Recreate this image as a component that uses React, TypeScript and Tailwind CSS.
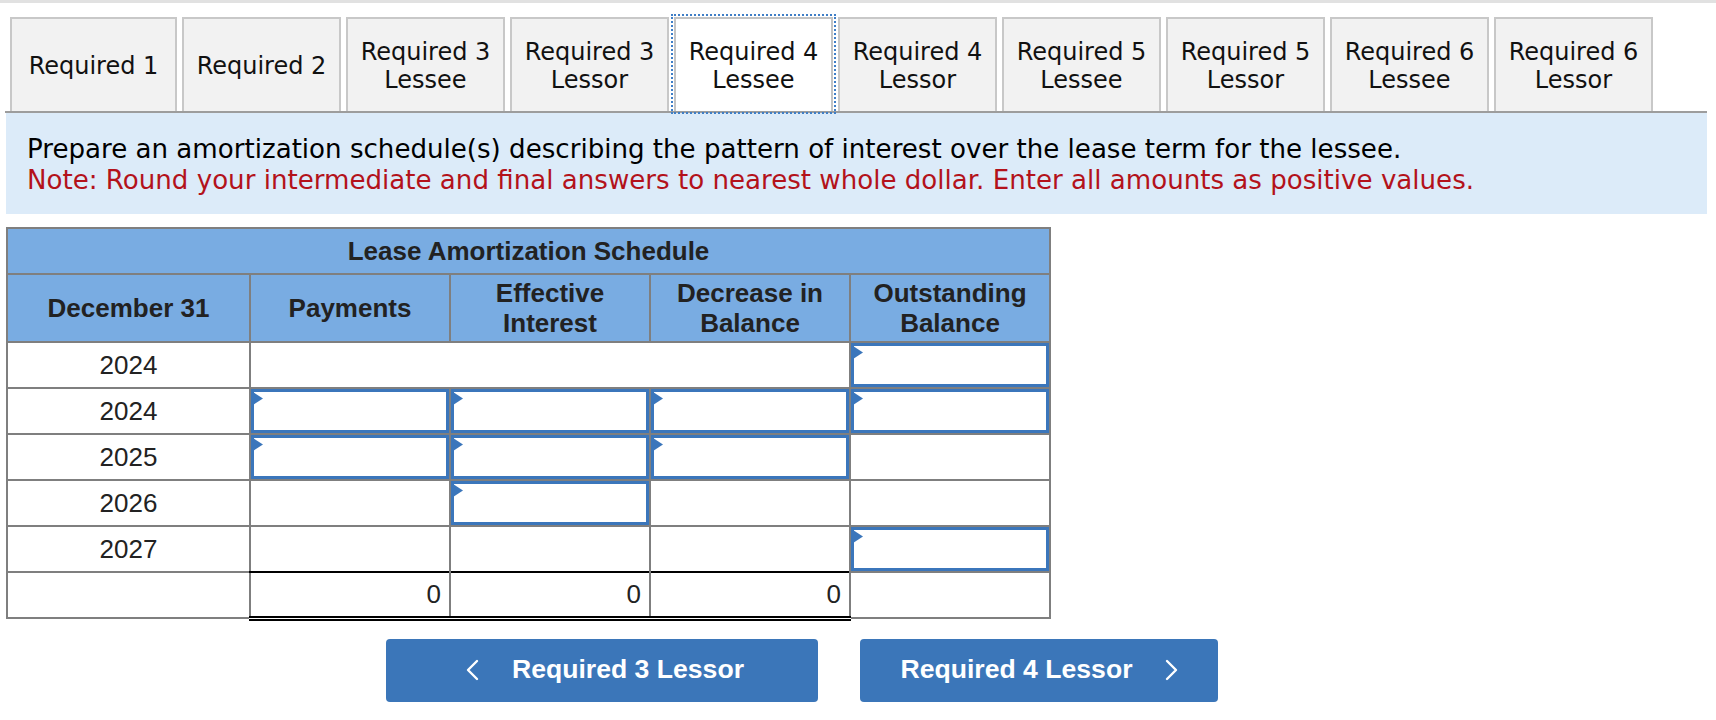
import React from "react";

const tabs: { l1: string; l2?: string; w: string; active?: boolean }[] = [
  { l1: "Required 1", w: "w-[167px]" },
  { l1: "Required 2", w: "w-[159px]" },
  { l1: "Required 3", l2: "Lessee", w: "w-[159px]" },
  { l1: "Required 3", l2: "Lessor", w: "w-[159px]" },
  { l1: "Required 4", l2: "Lessee", w: "w-[159px]", active: true },
  { l1: "Required 4", l2: "Lessor", w: "w-[159px]" },
  { l1: "Required 5", l2: "Lessee", w: "w-[159px]" },
  { l1: "Required 5", l2: "Lessor", w: "w-[159px]" },
  { l1: "Required 6", l2: "Lessee", w: "w-[159px]" },
  { l1: "Required 6", l2: "Lessor", w: "w-[159px]" },
];

const B = "border-2 border-[#7f7f7f]";

function Flag() {
  return (
    <svg className="absolute left-[-1px] top-0" width="10" height="13" viewBox="0 0 10 13">
      <polygon points="0,0 10,6.5 0,13" fill="#3b76bb" />
    </svg>
  );
}

function InputCell({ extra = "" }: { extra?: string }) {
  return (
    <td className={`${B} p-0 ${extra}`}>
      <div className="relative h-[44px] w-full border-[3px] border-[#3b76bb] bg-white">
        <Flag />
      </div>
    </td>
  );
}

function PlainCell({ extra = "" }: { extra?: string }) {
  return <td className={`${B} p-0 ${extra}`}></td>;
}

function YearCell({ y }: { y: string }) {
  return <td className={`${B} p-0 text-center`}>{y}</td>;
}

function Chevron({ dir }: { dir: "left" | "right" }) {
  return (
    <svg width="13" height="22" viewBox="0 0 13 22" className="shrink-0">
      <polyline
        points={dir === "left" ? "11,2 2,11 11,20" : "2,2 11,11 2,20"}
        fill="none"
        stroke="white"
        strokeWidth="2.4"
        strokeLinecap="round"
        strokeLinejoin="round"
      />
    </svg>
  );
}

export default function App() {
  return (
    <div className="relative h-[720px] w-[1716px] overflow-hidden bg-white">
      <div className="h-[3px] w-full bg-[#e1e1e1]" />

      {/* Tabs */}
      <div className="ml-[5px] mt-[14px] mr-[9px] border-b-2 border-[#9d9d9d] pl-[5px]">
        <div className="flex items-end gap-[5px] font-['DejaVu_Sans',Verdana,sans-serif] text-[24px] leading-[28px] text-[#111]">
          {tabs.map((t, i) => (
            <div
              key={i}
              className={`${t.w} flex h-[94px] flex-col items-center justify-center border-2 border-b-0 pt-[2px] text-center ${
                t.active
                  ? "border-[#c4c4c4] bg-white outline-2 outline-offset-[1px] outline-dotted outline-[#3f7ec6]"
                  : "border-[#c8c8c8] bg-[#f2f2f2]"
              }`}
            >
              <div>{t.l1}</div>
              {t.l2 && <div>{t.l2}</div>}
            </div>
          ))}
        </div>
      </div>

      {/* Instruction panel */}
      <div className="ml-[6px] flex h-[101px] w-[1701px] flex-col justify-center bg-[#dcebf9] px-[21px] pt-[3px] font-['DejaVu_Sans',Verdana,sans-serif] text-[26.1px] leading-[31px]">
        <div className="text-black">
          Prepare an amortization schedule(s) describing the pattern of interest over the lease term for the lessee.
        </div>
        <div className="text-[#b3121b]">
          Note: Round your intermediate and final answers to nearest whole dollar. Enter all amounts as positive values.
        </div>
      </div>

      {/* Table */}
      <div className="ml-[6px] mt-[13px]">
        <table className="border-collapse font-['Liberation_Sans',Arial,sans-serif] text-[26px] text-[#222]">
          <colgroup>
            <col className="w-[243px]" />
            <col className="w-[200px]" />
            <col className="w-[200px]" />
            <col className="w-[200px]" />
            <col className="w-[200px]" />
          </colgroup>
          <thead>
            <tr className="h-[46px] bg-[#79ace2]">
              <th colSpan={5} className={`${B} p-0 text-center font-bold`}>
                Lease Amortization Schedule
              </th>
            </tr>
            <tr className="h-[68px] bg-[#79ace2] leading-[30px]">
              <th className={`${B} p-0 text-center font-bold`}>December 31</th>
              <th className={`${B} p-0 text-center font-bold`}>Payments</th>
              <th className={`${B} p-0 text-center font-bold`}>
                Effective
                <br />
                Interest
              </th>
              <th className={`${B} p-0 text-center font-bold`}>
                Decrease in
                <br />
                Balance
              </th>
              <th className={`${B} p-0 text-center font-bold`}>
                Outstanding
                <br />
                Balance
              </th>
            </tr>
          </thead>
          <tbody>
            <tr className="h-[46px]">
              <YearCell y="2024" />
              <td colSpan={3} className={`${B} p-0`}></td>
              <InputCell />
            </tr>
            <tr className="h-[46px]">
              <YearCell y="2024" />
              <InputCell />
              <InputCell />
              <InputCell />
              <InputCell />
            </tr>
            <tr className="h-[46px]">
              <YearCell y="2025" />
              <InputCell />
              <InputCell />
              <InputCell />
              <PlainCell />
            </tr>
            <tr className="h-[46px]">
              <YearCell y="2026" />
              <PlainCell />
              <InputCell />
              <PlainCell />
              <PlainCell />
            </tr>
            <tr className="h-[46px]">
              <YearCell y="2027" />
              <PlainCell extra="border-b-0" />
              <PlainCell extra="border-b-0" />
              <PlainCell extra="border-b-0" />
              <InputCell />
            </tr>
            <tr className="h-[46px]">
              <PlainCell />
              {[0, 1, 2].map((k) => (
                <td
                  key={k}
                  className="border-x-2 border-x-[#7f7f7f] border-t-2 border-t-black border-b-[5px] border-double border-b-black p-0 pr-[8px] text-right"
                >
                  0
                </td>
              ))}
              <PlainCell />
            </tr>
          </tbody>
        </table>
      </div>

      {/* Buttons */}
      <div className="mt-[18px] flex gap-[42px] pl-[386px] font-['Liberation_Sans',Arial,sans-serif] text-[26.6px] font-bold text-white">
        <button className="flex h-[63px] w-[432px] items-center justify-center gap-[33px] rounded-[4px] bg-[#3b76b9] pl-[6px]">
          <Chevron dir="left" />
          <span>Required 3 Lessor</span>
        </button>
        <button className="flex h-[63px] w-[358px] items-center justify-center gap-[32px] rounded-[4px] bg-[#3b76b9]">
          <span>Required 4 Lessor</span>
          <Chevron dir="right" />
        </button>
      </div>
    </div>
  );
}
